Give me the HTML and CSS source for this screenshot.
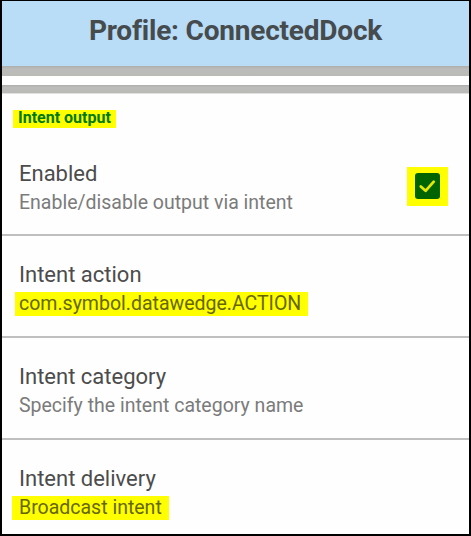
FILE: index.html
```html
<!DOCTYPE html>
<html lang="en">

<head>
	<meta charset="utf-8">
	<title>Profile: ConnectedDock</title>
	<link rel="stylesheet" href="styles.css">
</head>

<body>
	<div class="screen">
		<div class="header">
			<h1>Profile: ConnectedDock</h1>
		</div>
		<div class="band"></div>
		<div class="gap"></div>
		<div class="band band-thin"></div>

		<div class="category">
			<span class="category-label">Intent output</span>
		</div>

		<div class="pref pref-first">
			<div class="pref-text">
				<p class="pref-title">Enabled</p>
				<p class="pref-summary">Enable/disable output via intent</p>
			</div>
			<div class="check-mark">
				<div class="check-box">
					<svg width="26" height="26" viewBox="0 0 26 26">
						<path d="M6 13.5 L11 18 L19.5 8.5" fill="none" stroke="#e8e800" stroke-width="2.8" stroke-linecap="round" stroke-linejoin="round" />
					</svg>
				</div>
			</div>
		</div>

		<div class="pref">
			<div class="pref-text">
				<p class="pref-title">Intent action</p>
				<p class="pref-summary"><span class="mark">com.symbol.datawedge.ACTION</span></p>
			</div>
		</div>

		<div class="pref">
			<div class="pref-text">
				<p class="pref-title">Intent category</p>
				<p class="pref-summary">Specify the intent category name</p>
			</div>
		</div>

		<div class="pref">
			<div class="pref-text">
				<p class="pref-title">Intent delivery</p>
				<p class="pref-summary"><span class="mark mark-wide">Broadcast intent</span></p>
			</div>
		</div>
	</div>
</body>

</html>
```

FILE: styles.css
```css
/* common css */
* {
	margin: 0;
	padding: 0;
	box-sizing: border-box;
}

body {
	font-family: Roboto, 'Noto Sans', sans-serif;
	background-color: #fff;
}

/* screen frame */
.screen {
	width: 471px;
	height: 536px;
	border: 2px solid #000;
	border-top-width: 1px;
	overflow: hidden;
	background-color: #fefefe;
}

/* title bar */
.header {
	height: 65px;
	background-color: #b9dcf7;
	display: flex;
	align-items: center;
	justify-content: center;
	padding-bottom: 6px;
}

.header h1 {
	font-size: 28px;
	font-weight: bold;
	color: #464b4e;
	letter-spacing: -0.2px;
}

.band {
	height: 10px;
	background: linear-gradient(#aeaeac, #bcbcba 30%, #babab7);
}

.band-thin {
	height: 9px;
	border-bottom: 1px solid #e0e0de;
}

.gap {
	height: 9px;
	background-color: #fff;
}

/* category header */
.category {
	height: 46px;
	padding: 14px 0 0 11px;
}

.category-label {
	display: inline-block;
	background-color: #ffff00;
	color: #007a00;
	font-size: 16px;
	font-weight: bold;
	line-height: 15px;
	padding: 0 5px 3px 5px;
}

/* preference rows */
.pref {
	display: flex;
	align-items: center;
	padding: 25px 19px 20px 17px;
	border-top: 2px solid #bfbfbf;
}

.pref-first {
	border-top: none;
	padding-top: 20px;
	height: 94px;
}

.pref-text {
	flex: 1;
}

.pref-title {
	font-size: 22px;
	line-height: 28px;
	color: #4c4c4c;
}

.pref-summary {
	font-size: 19.5px;
	line-height: 24px;
	margin-top: 3px;
	color: #7b7b7b;
}

.mark {
	display: inline-block;
	background-color: #ffff00;
	color: #666600;
	padding: 0 7px 0 4px;
	margin-left: -4px;
}

.mark-wide {
	padding-left: 7px;
	margin-left: -7px;
}

/* checkbox */
.check-mark {
	width: 41px;
	height: 39px;
	background-color: #ffff00;
	display: flex;
	align-items: center;
	justify-content: center;
	margin-right: 2px;
	margin-top: -2px;
}

.check-box {
	width: 25px;
	height: 26px;
	border-radius: 3px;
	background-color: #006400;
	display: flex;
}
```
